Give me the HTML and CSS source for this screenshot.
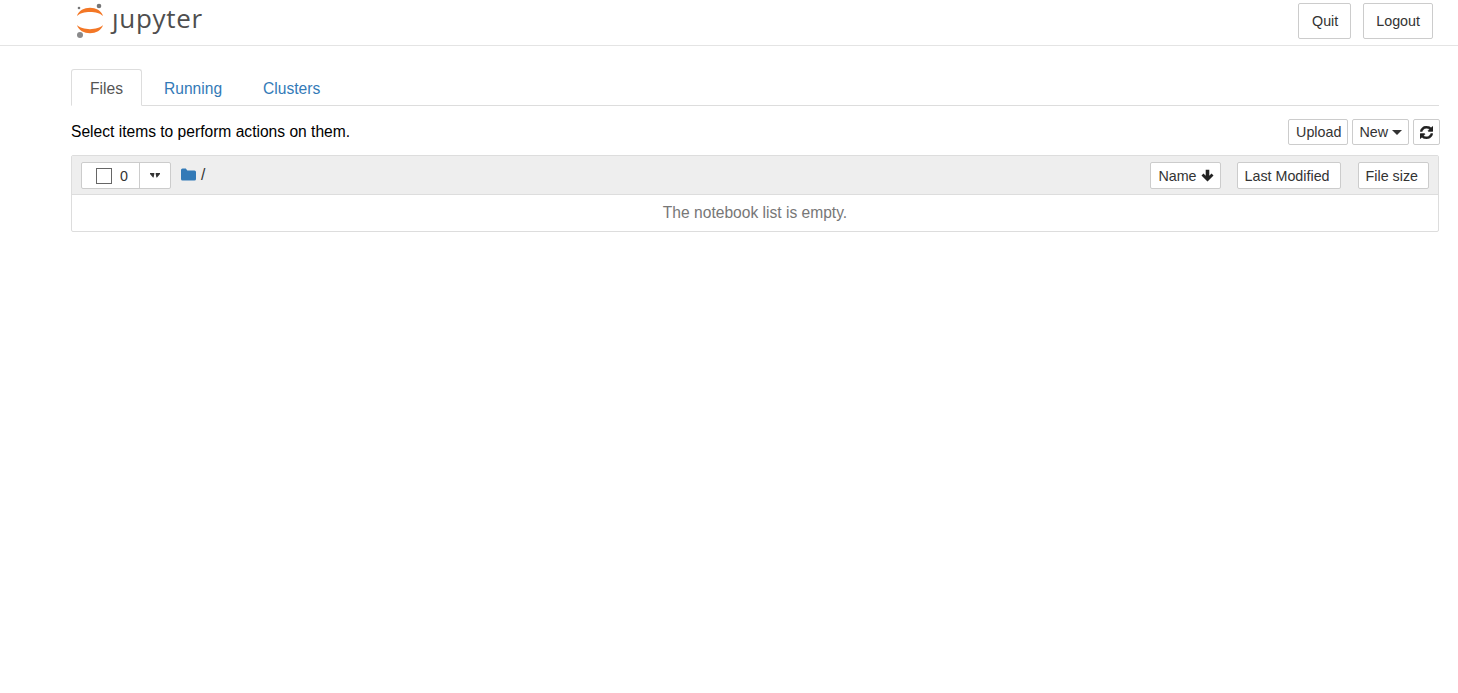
FILE: index.html
```html
<!DOCTYPE html>
<html lang="en">
<head>
<meta charset="utf-8">
<title>Home</title>
<link rel="stylesheet" href="styles.css">
</head>
<body>
<header class="site-header">
  <div class="brand">
    <svg class="logo-mark" width="28" height="38" viewBox="0 0 28 38" aria-hidden="true">
      <path d="M1 14C4 3 24 3 27 14C22 8.500 6 8.500 1 14Z" fill="#f37726"/>
      <path d="M1 23C4 34 24 34 27 23C22 28.500 6 28.500 1 23Z" fill="#f37726"/>
      <circle cx="23" cy="4" r="2.300" fill="#767677"/>
      <circle cx="3" cy="6" r="1.300" fill="#767677"/>
      <circle cx="4" cy="33" r="3" fill="#8a8a8b"/>
    </svg>
    <span class="logo-text">ȷupyter</span>
  </div>
  <div class="header-actions">
    <button class="btn btn-header btn-quit">Quit</button>
    <button class="btn btn-header">Logout</button>
  </div>
</header>
<main class="container">
  <nav class="tabs">
    <a class="tab tab-active">Files</a>
    <a class="tab">Running</a>
    <a class="tab">Clusters</a>
  </nav>
  <div class="toolbar">
    <span class="hint">Select items to perform actions on them.</span>
    <div class="toolbar-actions">
      <button class="btn btn-small btn-upload">Upload</button>
      <button class="btn btn-small">New <span class="caret"></span></button>
      <button class="btn btn-small btn-icon" aria-label="Refresh">
        <svg class="refresh-icon" width="13" height="13" viewBox="0 0 1536 1536" aria-hidden="true"><path d="M1511 928q0 5-1 7-64 268-268 434.500T764 1536q-146 0-282.500-55T238 1324l-129 129q-19 19-45 19t-45-19-19-45V960q0-26 19-45t45-19h448q26 0 45 19t19 45-19 45l-137 137q71 66 161 102t187 36q134 0 250-65t186-179q11-17 53-117 8-23 30-23h192q13 0 22.500 9.500T1511 928zm25-800v448q0 26-19 45t-45 19h-448q-26 0-45-19t-19-45 19-45l138-138Q969 256 768 256q-134 0-250 65T332 500q-11 17-53 117-8 23-30 23H50q-13 0-22.500-9.500T18 608v-7q65-268 270-434.500T768 0q146 0 284 55.500T1297 212l130-129q19-19 45-19t45 19 19 45z"/></svg>
      </button>
    </div>
  </div>
  <section class="list">
    <div class="list-head">
      <div class="select-group">
        <span class="select-main"><span class="checkbox"></span><span>0</span></span>
        <span class="select-drop">
          <svg width="10" height="5" viewBox="0 0 10 5" aria-hidden="true"><path fill="#333" d="M0 0h4.300v1L3.600 4.500H3L0 1zM5.700 0H10v1L7 4.500h-.6L5.700 1z"/></svg>
        </span>
      </div>
      <span class="crumb">
        <svg width="15" height="13" viewBox="0 0 15 13" aria-hidden="true"><path fill="#337ab7" d="M0 2a1.500 1.500 0 0 1 1.500-1.500h3.300L6.300 2.500h7.200A1.500 1.500 0 0 1 15 4v7a1.500 1.500 0 0 1-1.500 1.500h-12A1.500 1.500 0 0 1 0 11z"/></svg>
        <span class="crumb-sep">/</span>
      </span>
      <div class="sort-group">
        <button class="btn btn-sort btn-name">Name
          <svg width="13" height="13" viewBox="0 0 13 13" aria-hidden="true"><path fill="#222" d="M6.500 12.500L.5 6.500l2-2 2.200 2.200V.8h3.600v5.900l2.200-2.200 2 2z"/></svg>
        </button>
        <button class="btn btn-sort">Last Modified</button>
        <button class="btn btn-sort btn-size">File size</button>
      </div>
    </div>
    <div class="list-empty">The notebook list is empty.</div>
  </section>
</main>
</body>
</html>
```
FILE: styles.css
```css
* { box-sizing: border-box; }
html, body { margin: 0; background: #fff; }
body {
  font-family: "Liberation Sans", Arial, sans-serif;
  font-size: 15.6px;
  color: #000;
  height: 693px;
  overflow: hidden;
}
.site-header {
  height: 46px;
  border-bottom: 1px solid #e4e4e4;
  padding: 3px 25px 0 76px;
  display: flex;
  justify-content: space-between;
  align-items: flex-start;
}
.brand { display: flex; align-items: flex-start; gap: 8px; margin-top: -1px; }
.logo-mark { display: block; }
.logo-text {
  font-family: "Open Sans", sans-serif;
  font-size: 26px;
  line-height: 32px;
  letter-spacing: 0.7px;
  color: #4e4e4e;
}
.header-actions { display: flex; gap: 12px; }
.btn {
  font-family: inherit;
  background: #fff;
  border: 1px solid #ccc;
  border-radius: 2px;
  color: #333;
  padding: 0;
  margin: 0;
  display: inline-flex;
  align-items: center;
  justify-content: center;
  white-space: nowrap;
}
.btn-header { height: 36px; padding: 0 12px; font-size: 14.300px; }
.btn-quit { padding-left: 13px; }
.btn-small { height: 26px; padding: 0 6px; font-size: 14.300px; gap: 4px; }
.btn-upload { padding-left: 7px; }
.btn-sort { height: 27px; padding: 0 10px 0 7px; font-size: 14.300px; gap: 4px; }
.btn-name { padding: 0 6px 0 7px; }
.btn-size { margin-left: 1px; }
.btn-icon { width: 27px; padding: 0; }
.refresh-icon { fill: #222; stroke: #222; stroke-width: 60; }
.container { margin: 23px 19px 0 71px; }
.tabs {
  display: flex;
  height: 37px;
  border-bottom: 1px solid #ddd;
}
.tab {
  height: 37px;
  padding: 0 19px 0 22px;
  font-size: 15.600px;
  line-height: 39px;
  color: #337ab7;
}
.tab-active {
  width: 71px;
  padding: 0;
  text-align: center;
  color: #555;
  background: #fff;
  border: 1px solid #ddd;
  border-bottom-color: #fff;
  border-radius: 3px 3px 0 0;
  line-height: 37px;
}
.toolbar {
  display: flex;
  justify-content: space-between;
  align-items: center;
  height: 26px;
  margin: 13px -1px 0 0;
}
.hint { font-size: 15.600px; }
.toolbar-actions { display: flex; gap: 4px; }
.caret {
  display: inline-block;
  width: 0;
  height: 0;
  border-left: 5px solid transparent;
  border-right: 5px solid transparent;
  border-top: 5px solid #333;
}
.list {
  margin-top: 10px;
  border: 1px solid #ddd;
  border-radius: 2px;
}
.list-head {
  height: 39px;
  background: #eee;
  border-bottom: 1px solid #ddd;
  padding: 6px 9px 0 9px;
  display: flex;
  align-items: flex-start;
}
.select-group {
  display: flex;
  height: 27px;
  background: #fff;
  border: 1px solid #ccc;
  border-radius: 2px;
}
.select-main {
  width: 58px;
  display: flex;
  align-items: center;
  justify-content: flex-start;
  gap: 8px;
  padding-left: 14px;
  font-size: 14.300px;
  color: #333;
  border-right: 1px solid #ccc;
}
.checkbox {
  width: 16px;
  height: 16px;
  border: 1px solid #666;
  background: #fff;
}
.select-drop {
  width: 30px;
  display: flex;
  align-items: center;
  justify-content: center;
}
.crumb {
  display: flex;
  align-items: center;
  gap: 5px;
  margin-left: 10px;
  height: 24px;
  font-size: 15.600px;
  color: #333;
}
.crumb-sep { line-height: 26px; padding-top: 1px; }
.sort-group { margin-left: auto; display: flex; gap: 16px; }
.list-empty {
  height: 36px;
  text-align: center;
  line-height: 35px;
  font-size: 15.600px;
  color: #777;
}
```
